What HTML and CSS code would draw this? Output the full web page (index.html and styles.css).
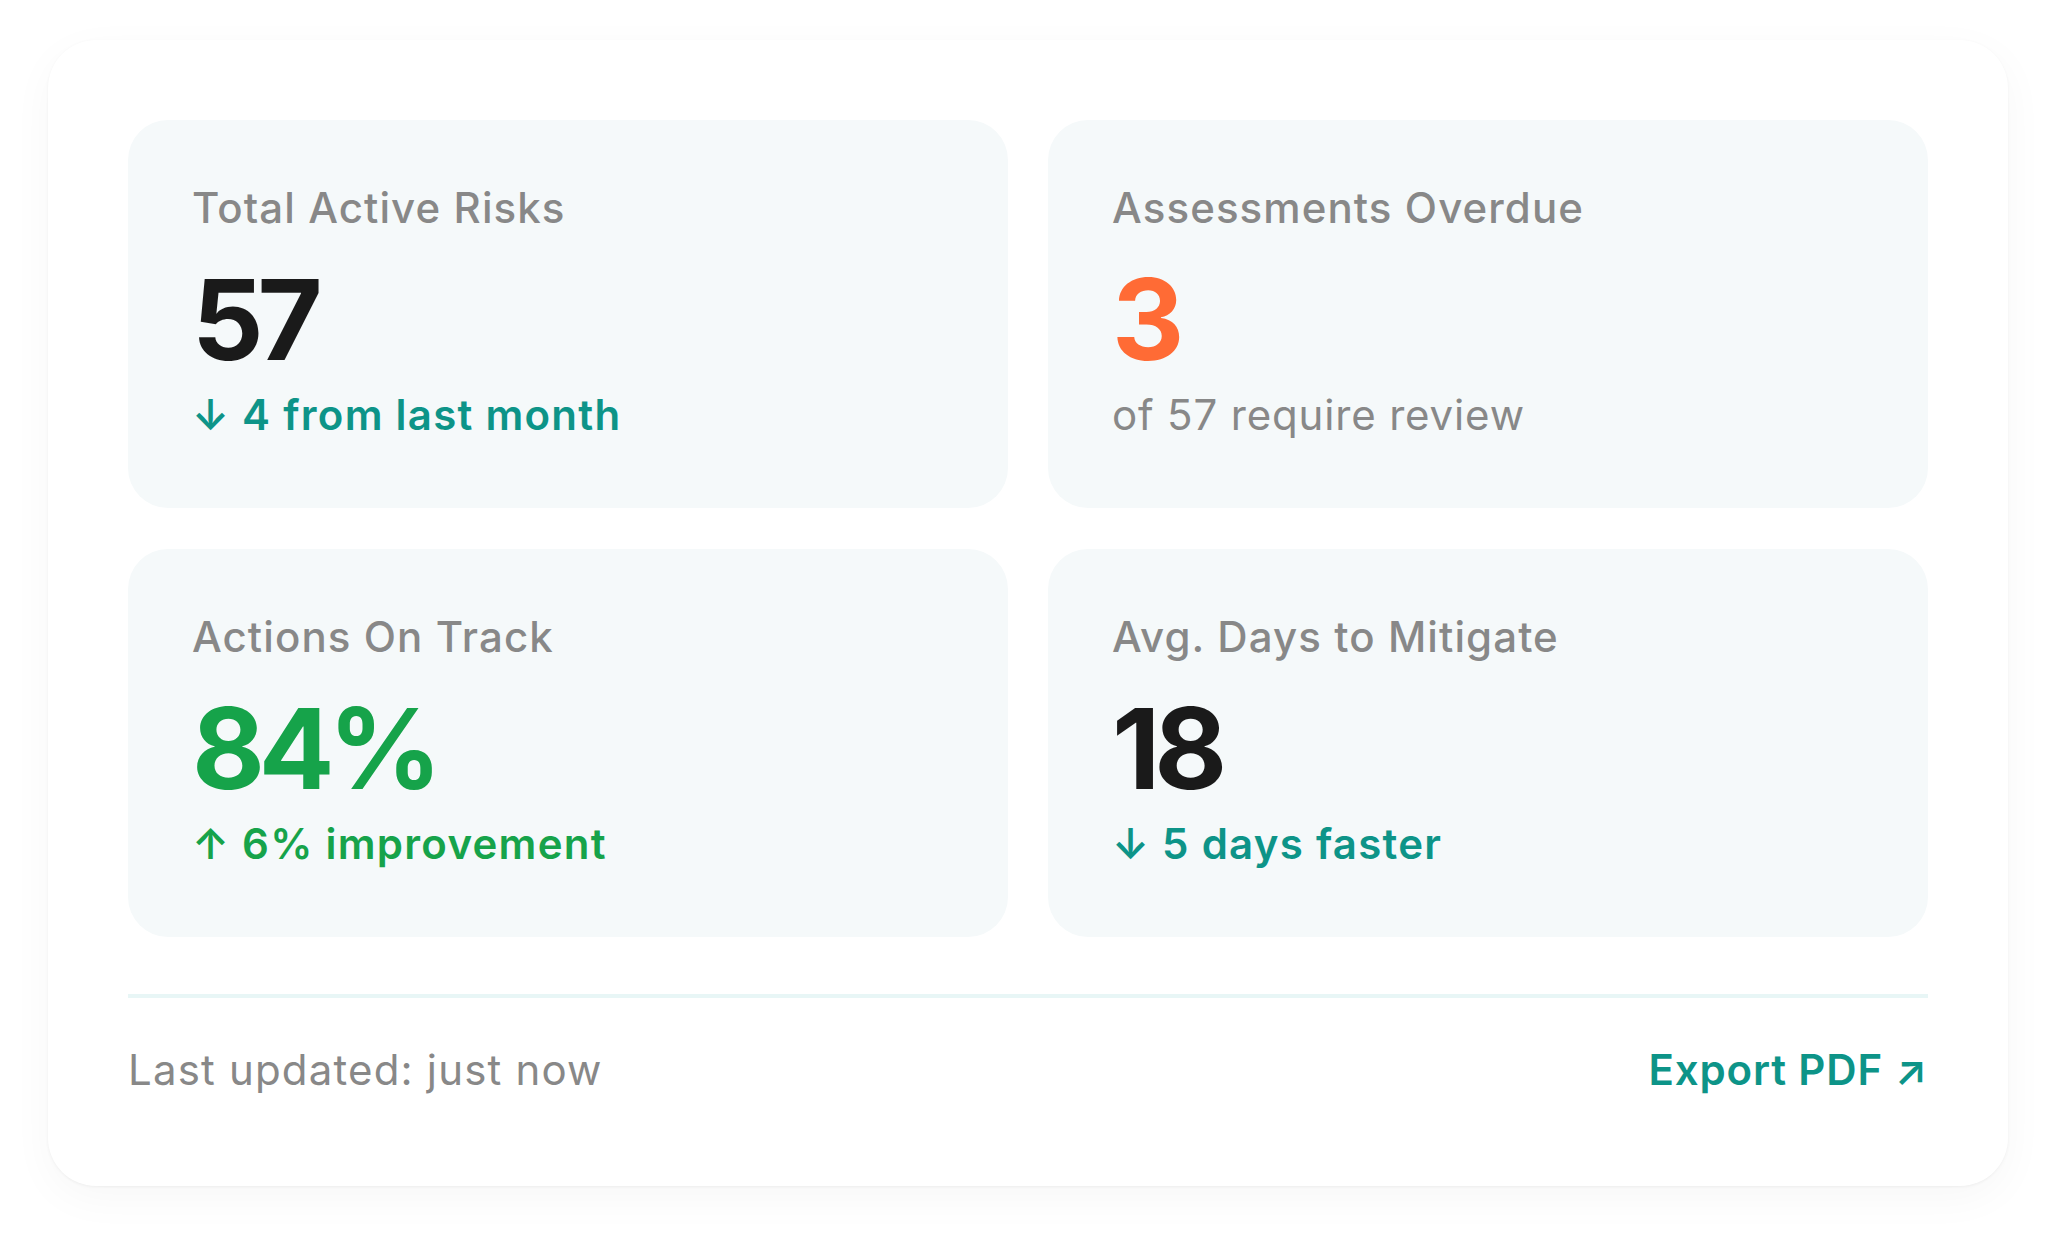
FILE: index.html
```html
<!DOCTYPE html>
<html lang="en">
<head>
<meta charset="utf-8">
<title>Risk Overview</title>
<link rel="stylesheet" href="styles.css">
</head>
<body>
<main class="panel">
  <section class="grid">
    <article class="card">
      <div class="label">Total Active Risks</div>
      <div class="value value-dark">57</div>
      <div class="sub sub-teal"><span class="arrow">↓</span> 4 from last month</div>
    </article>
    <article class="card">
      <div class="label">Assessments Overdue</div>
      <div class="value value-orange">3</div>
      <div class="sub sub-muted">of 57 require review</div>
    </article>
    <article class="card">
      <div class="label">Actions On Track</div>
      <div class="value value-green">84%</div>
      <div class="sub sub-green"><span class="arrow">↑</span> 6% improvement</div>
    </article>
    <article class="card">
      <div class="label">Avg. Days to Mitigate</div>
      <div class="value value-dark">18</div>
      <div class="sub sub-teal"><span class="arrow">↓</span> 5 days faster</div>
    </article>
  </section>
  <footer class="footer">
    <span class="updated">Last updated: just now</span>
    <a class="export" href="#">Export PDF <span class="export-arrow">↗</span></a>
  </footer>
</main>
</body>
</html>
```

FILE: styles.css
```css
* {
  box-sizing: border-box;
}

html, body {
  margin: 0;
  background: #ffffff;
}

body {
  padding: 40px 48px;
  font-family: Inter, "Noto Sans", "Liberation Sans", sans-serif;
  -webkit-font-smoothing: antialiased;
}

.panel {
  width: 1960px;
  margin: 0 auto;
  padding: 80px 80px 92px;
  background: #ffffff;
  border-radius: 48px;
  box-shadow: 0 1px 3px rgba(0, 0, 0, 0.05), 0 12px 44px rgba(0, 0, 0, 0.035);
}

.grid {
  display: grid;
  grid-template-columns: 1fr 1fr;
  gap: 41px 40px;
}

.card {
  background: #f5f9fa;
  border-radius: 40px;
  padding: 64px 64px 67px;
  display: flex;
  flex-direction: column;
}

.label {
  font-size: 42px;
  line-height: 48px;
  font-weight: 500;
  color: #888888;
  letter-spacing: 0.026em;
}

.value {
  margin-top: 20px;
  font-size: 112px;
  line-height: 134px;
  font-weight: 700;
  letter-spacing: -0.055em;
}

.value-dark { color: #1a1a1a; }
.value-orange { color: #ff6b35; }
.value-green { color: #16a34a; }

.sub {
  margin-top: 3px;
  font-size: 42px;
  line-height: 52px;
  letter-spacing: 0.03em;
}

.sub-teal { color: #0d9488; font-weight: 600; }
.sub-green { color: #16a34a; font-weight: 600; }
.sub-muted { color: #888888; font-weight: 400; letter-spacing: 0.02em; }

.footer {
  margin-top: 57px;
  border-top: 4px solid #e8f6f6;
  padding-top: 48px;
  display: flex;
  justify-content: space-between;
  align-items: center;
  font-size: 42px;
  line-height: 48px;
  letter-spacing: 0.02em;
}

.updated {
  color: #888888;
  letter-spacing: 0.028em;
}

.export {
  color: #0d9488;
  font-weight: 600;
  text-decoration: none;
}
```
